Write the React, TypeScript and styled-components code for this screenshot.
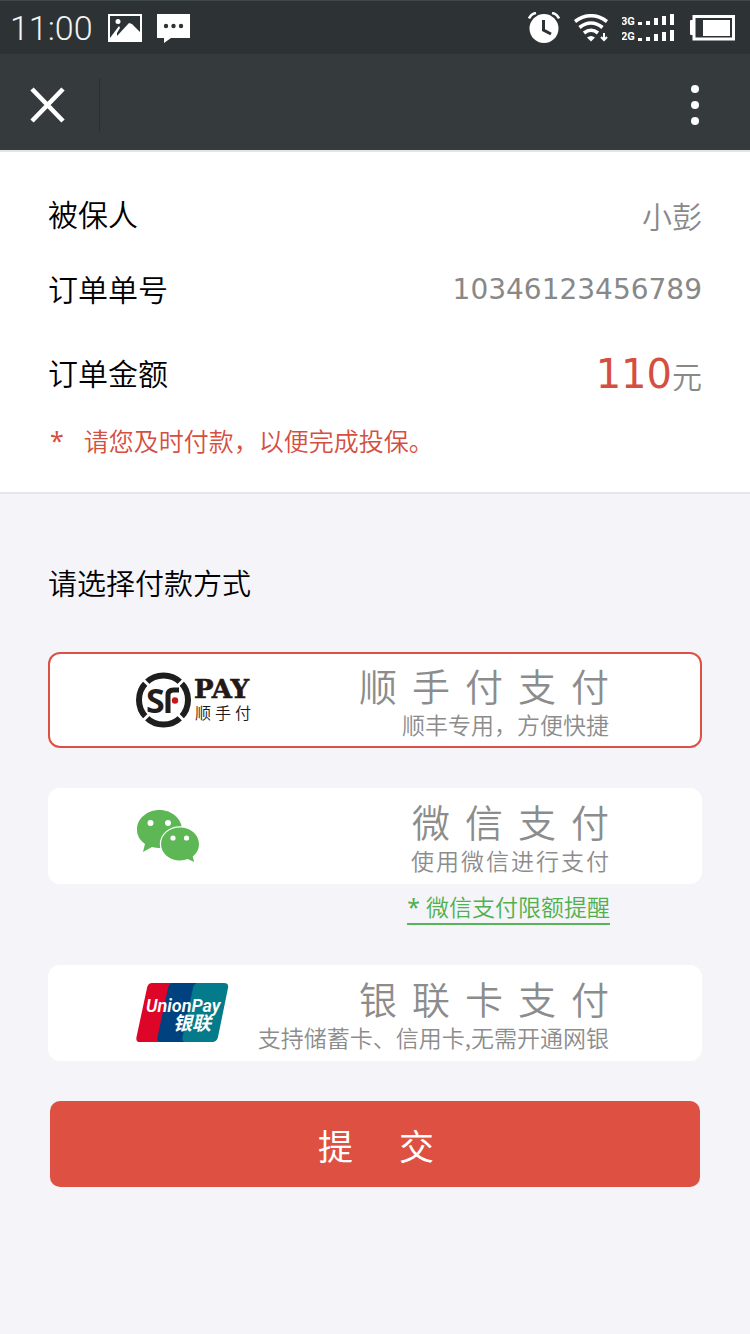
import React, { useState } from 'react';
import styled, { createGlobalStyle } from 'styled-components';

const cjk = `"Noto Sans CJK SC", "Noto Sans", sans-serif`;

const GlobalStyle = createGlobalStyle`
  * { box-sizing: border-box; }
  body {
    margin: 0;
    background: #f4f4f9;
    font-family: ${cjk};
    font-weight: 350;
    color: #000;
  }
`;

const Page = styled.div`
  display: flex;
  flex-direction: column;
  min-height: 100vh;
`;

const StatusBar = styled.div`
  display: flex;
  align-items: center;
  justify-content: space-between;
  height: 54px;
  padding: 0 15px 0 10px;
  background: #2d3335;
  border-top: 1px solid #414748;
  color: #fff;
`;

const StatusGroup = styled.div<{ $gap: number }>`
  display: flex;
  align-items: center;
  gap: ${(p) => p.$gap}px;
`;

const Clock = styled.time`
  font: 300 34px/40px Roboto, sans-serif;
  color: #f2f2f2;
`;

const NavBar = styled.header`
  display: flex;
  align-items: center;
  justify-content: space-between;
  height: 98px;
  padding: 6px 38px 0 0;
  background: #353b3d;
  border-bottom: 2px solid #e4e4e4;
`;

const NavStart = styled.div`
  display: flex;
  align-items: center;
  width: 100px;
  height: 54px;
  padding-left: 30px;
  border-right: 1px solid #2a3032;
`;

const IconButton = styled.button`
  display: flex;
  padding: 0;
  border: 0;
  background: none;
  color: #fff;
  cursor: pointer;
`;

const Order = styled.section`
  padding: 23px 48px 34px;
  background: #fff;
  border-bottom: 2px solid #e6e6e8;
`;

const OrderList = styled.dl`
  margin: 0;
`;

const OrderRow = styled.div<{ $height: number }>`
  display: flex;
  align-items: center;
  justify-content: space-between;
  height: ${(p) => p.$height}px;
`;

const OrderLabel = styled.dt`
  font-size: 30px;
  line-height: 40px;
`;

const OrderValue = styled.dd`
  display: flex;
  align-items: baseline;
  margin: 0;
  padding-top: 4px;
  font-size: 30px;
  line-height: 40px;
  color: #888;
`;

const OrderNumber = styled.span`
  font-family: "DejaVu Sans", sans-serif;
  font-size: 28px;
  font-weight: 400;
`;

const Amount = styled.strong`
  font-family: "DejaVu Sans", sans-serif;
  font-size: 40px;
  font-weight: 400;
  color: #d54f40;
`;

const Notice = styled.p`
  display: flex;
  gap: 20px;
  margin: 3px 0 0;
  padding-left: 2px;
  font-size: 25px;
  line-height: 36px;
  color: #d54f40;
`;

const Asterisk = styled.span`
  font-family: "Noto Sans", sans-serif;
  font-weight: 400;
`;

const Payment = styled.form`
  display: flex;
  flex-direction: column;
  padding: 68px 48px 0;
`;

const Methods = styled.fieldset`
  display: flex;
  flex-direction: column;
  gap: 40px;
  min-width: 0;
  margin: 0;
  padding: 0;
  border: 0;
`;

const Heading = styled.legend`
  margin-bottom: 50px;
  padding: 0;
  font-size: 29px;
  line-height: 40px;
`;

const Method = styled.div`
  display: flex;
  flex-direction: column;
`;

const Card = styled.label<{ $selected: boolean }>`
  position: relative;
  display: flex;
  align-items: center;
  justify-content: space-between;
  height: 96px;
  padding: 0 91px 0 86px;
  border: 2px solid ${(p) => (p.$selected ? '#dd5044' : '#fff')};
  border-radius: 12px;
  background: #fff;
  cursor: pointer;
`;

const HiddenRadio = styled.input`
  position: absolute;
  inset: 0;
  margin: 0;
  opacity: 0;
`;

const CardText = styled.span`
  display: flex;
  flex-direction: column;
  align-items: flex-end;
  padding-top: 4px;
  white-space: nowrap;
  color: #8c8c8c;
`;

const CardTitle = styled.span`
  margin-right: -15px;
  font-size: 38px;
  line-height: 44px;
  letter-spacing: 15px;
`;

const CardNote = styled.span<{ $spacing?: number }>`
  margin-right: -${(p) => p.$spacing ?? 0}px;
  font-size: 23px;
  line-height: 34px;
  letter-spacing: ${(p) => p.$spacing ?? 0}px;
`;

const LimitLink = styled.a`
  align-self: flex-end;
  margin: 7px 92px 0 0;
  border-bottom: 2px solid #57b557;
  font-size: 23px;
  line-height: 31px;
  color: #4fb04d;
  text-decoration: none;
`;

const Submit = styled.button`
  height: 86px;
  margin: 40px 2px 0;
  padding: 0 0 0 48px;
  border: 0;
  border-radius: 10px;
  background: #dd5042;
  font-family: ${cjk};
  font-size: 35px;
  font-weight: 400;
  letter-spacing: 46px;
  color: #fff;
  cursor: pointer;
`;

const PictureIcon = () => (
  <svg width="34" height="28" viewBox="0 0 34 28" aria-hidden="true">
    <rect x="1" y="1" width="32" height="26" fill="none" stroke="#fff" strokeWidth="2" />
    <circle cx="10" cy="7.500" r="2.500" fill="#fff" />
    <path d="M2 24l6-8 3-4 1 2-3 5v3l12-13 3 1 9 9v7H2z" fill="#fff" />
  </svg>
);

const ChatIcon = () => (
  <svg width="33" height="31" viewBox="0 0 33 31" aria-hidden="true">
    <path d="M0 2h33v24H14l-7 5v-5H0z" fill="#fff" />
    <g fill="#2d3335">
      <circle cx="9" cy="14" r="2.200" />
      <circle cx="16.500" cy="14" r="2.200" />
      <circle cx="24" cy="14" r="2.200" />
    </g>
  </svg>
);

const AlarmIcon = () => (
  <svg width="32" height="31" viewBox="0 0 32 31" aria-hidden="true">
    <circle cx="16" cy="16.500" r="14.500" fill="#fff" />
    <path d="M1.500 7.500q2-5 7-6M30.500 7.500q-2-5-7-6" fill="none" stroke="#2d3335" strokeWidth="5" />
    <path d="M1 6.500q2-4.500 7-5.500M31 6.500q-2-4.500-7-5.500" fill="none" stroke="#fff" strokeWidth="2.600" />
    <path d="M15.500 8v10l7.500 4" fill="none" stroke="#2d3335" strokeWidth="3" />
  </svg>
);

const WifiIcon = () => (
  <svg width="34" height="28" viewBox="0 0 34 28" aria-hidden="true">
    <g fill="none" stroke="#fff" strokeWidth="3.600">
      <path d="M1 7.500q16-11.500 32 0" />
      <path d="M5.500 13.500q11.500-9 23 0" />
      <path d="M10 19q7-5.500 14 0" />
    </g>
    <path d="M13 23.500q4-3 8 0l-4 4z" fill="#fff" />
    <path d="M30 19v7M27 23l3 3 3-3" fill="none" stroke="#fff" strokeWidth="2" />
  </svg>
);

const SignalIcon = () => (
  <svg width="54" height="30" viewBox="0 0 54 30" aria-hidden="true">
    <g fill="#fff">
      {[1, 17].map((top) => (
        <g key={top}>
          {[3, 4, 7, 9, 11].map((h, i) => (
            <rect key={h} x={16 + i * 8} y={top + 11 - h} width="4" height={h} />
          ))}
        </g>
      ))}
      <g fontFamily="Roboto, sans-serif" fontWeight="700" fontSize="11">
        <text x="-1" y="12">3G</text>
        <text x="-1" y="27">2G</text>
      </g>
    </g>
  </svg>
);

const BatteryIcon = () => (
  <svg width="45" height="26" viewBox="0 0 45 26" aria-hidden="true">
    <rect x="4" y="1.500" width="39.500" height="22.500" fill="none" stroke="#fff" strokeWidth="3" />
    <rect x="0" y="5" width="4" height="15" rx="1" fill="#fff" />
    <rect x="13" y="5" width="27" height="16" fill="#fff" />
  </svg>
);

const CloseIcon = () => (
  <svg width="35" height="36" viewBox="0 0 35 36" aria-hidden="true">
    <path d="M2 2l31 32M33 2L2 34" stroke="#fff" strokeWidth="4.600" />
  </svg>
);

const MoreIcon = () => (
  <svg width="34" height="42" viewBox="0 0 34 42" aria-hidden="true">
    <g fill="#fff">
      <circle cx="17" cy="5" r="4" />
      <circle cx="17" cy="21" r="4" />
      <circle cx="17" cy="37" r="4" />
    </g>
  </svg>
);

const SfPayLogo = () => (
  <svg width="118" height="56" viewBox="0 0 118 56" role="img" aria-label="SF PAY 顺手付">
    <circle cx="27.500" cy="28" r="24.500" fill="none" stroke="#1f1d1e" strokeWidth="6" />
    <path
      d="M5 5.500l10 10M50 5.500l-10 10M5 50.500l10-10M50 50.500l-10-10"
      stroke="#fff"
      strokeWidth="3"
    />
    <text x="10" y="41" fontFamily="'Open Sans', sans-serif" fontWeight="700" fontSize="34" fill="#1f1d1e">S</text>
    <path d="M32 41V23q0-5 5.500-5H43" fill="none" stroke="#1f1d1e" strokeWidth="5" />
    <circle cx="39" cy="28.500" r="3.200" fill="#c8161e" />
    <text x="58" y="26" fontFamily="'DejaVu Serif', serif" fontWeight="700" fontSize="26" fill="#231815" stroke="#231815" strokeWidth="0.600">PAY</text>
    <text x="59" y="47" fontSize="16" letterSpacing="4" fontWeight="350" fill="#231815">顺手付</text>
  </svg>
);

const WechatLogo = () => (
  <svg width="64" height="54" viewBox="0 0 64 54" role="img" aria-label="微信">
    <path
      d="M23.500 1C11 1 1 9.500 1 20.500c0 6 3 11 8 14.500L7 43l9-5c2.500.6 5 1 7.500 1C36 39 46 31 46 20.500S36 1 23.500 1z"
      fill="#5cb754"
    />
    <path
      d="M44 18.500c-10.500 0-19 7.400-19 16.500s8.500 16.500 19 16.500c2.800 0 5.400-.5 7.700-1.400l6.500 2.900-1.500-5.600C60.700 44.500 63 40 63 35c0-9.100-8.500-16.500-19-16.500z"
      fill="#5cb754"
      stroke="#fff"
      strokeWidth="2.400"
      paintOrder="stroke"
    />
    <g fill="#fff">
      <circle cx="14.500" cy="14" r="3" />
      <circle cx="32" cy="14" r="3" />
      <circle cx="37" cy="29" r="2.600" />
      <circle cx="50.500" cy="29" r="2.600" />
    </g>
  </svg>
);

const UnionPayLogo = () => (
  <svg width="93" height="60" viewBox="0 0 93 60" role="img" aria-label="UnionPay 银联">
    <path d="M16 0h24L28 59H4q-4.500 0-3.500-5L11 5q1-5 5-5z" fill="#dd0629" />
    <path d="M37 0h24L50 59H25q-4.500 0-3.500-5L32 5q1-5 5-5z" fill="#00427f" />
    <path d="M62 0h26q5 0 4 5L82 54q-1 5-6 5H50q-4.500 0-3.500-5L57 5q1-5 5-5z" fill="#037b8a" />
    <text x="10" y="29" fontFamily="Roboto, sans-serif" fontWeight="600" fontStyle="italic" fontSize="18" fill="#fff">UnionPay</text>
    <text x="37" y="47" fontSize="19" fontWeight="700" fontStyle="italic" fill="#fff">银联</text>
  </svg>
);

interface MethodItem {
  id: string;
  title: string;
  note: string;
  spacing?: number;
  Logo: React.FC;
  link?: string;
}

const methods: MethodItem[] = [
  { id: 'sf', title: '顺手付支付', note: '顺丰专用，方便快捷', Logo: SfPayLogo },
  { id: 'wechat', title: '微信支付', note: '使用微信进行支付', spacing: 2, Logo: WechatLogo, link: '微信支付限额提醒' },
  { id: 'unionpay', title: '银联卡支付', note: '支持储蓄卡、信用卡,无需开通网银', Logo: UnionPayLogo },
];

export default function App() {
  const [selected, setSelected] = useState('sf');

  return (
    <Page>
      <GlobalStyle />
      <StatusBar>
        <StatusGroup $gap={15}>
          <Clock>11:00</Clock>
          <PictureIcon />
          <ChatIcon />
        </StatusGroup>
        <StatusGroup $gap={14}>
          <AlarmIcon />
          <WifiIcon />
          <SignalIcon />
          <BatteryIcon />
        </StatusGroup>
      </StatusBar>
      <NavBar>
        <NavStart>
          <IconButton type="button" aria-label="关闭">
            <CloseIcon />
          </IconButton>
        </NavStart>
        <IconButton type="button" aria-label="更多">
          <MoreIcon />
        </IconButton>
      </NavBar>
      <main>
        <Order>
          <OrderList>
            <OrderRow $height={75}>
              <OrderLabel>被保人</OrderLabel>
              <OrderValue>小彭</OrderValue>
            </OrderRow>
            <OrderRow $height={75}>
              <OrderLabel>订单单号</OrderLabel>
              <OrderValue>
                <OrderNumber>10346123456789</OrderNumber>
              </OrderValue>
            </OrderRow>
            <OrderRow $height={94}>
              <OrderLabel>订单金额</OrderLabel>
              <OrderValue>
                <Amount>110</Amount>元
              </OrderValue>
            </OrderRow>
          </OrderList>
          <Notice>
            <Asterisk>*</Asterisk>
            <span>请您及时付款，以便完成投保。</span>
          </Notice>
        </Order>
        <Payment onSubmit={(e) => e.preventDefault()}>
          <Methods>
            <Heading>请选择付款方式</Heading>
            {methods.map(({ id, title, note, spacing, Logo, link }) => (
              <Method key={id}>
                <Card $selected={selected === id}>
                  <HiddenRadio
                    type="radio"
                    name="method"
                    value={id}
                    checked={selected === id}
                    onChange={() => setSelected(id)}
                  />
                  <Logo />
                  <CardText>
                    <CardTitle>{title}</CardTitle>
                    <CardNote $spacing={spacing}>{note}</CardNote>
                  </CardText>
                </Card>
                {link && (
                  <LimitLink href="#limit">
                    <Asterisk>* </Asterisk>
                    {link}
                  </LimitLink>
                )}
              </Method>
            ))}
          </Methods>
          <Submit type="submit">提交</Submit>
        </Payment>
      </main>
    </Page>
  );
}
